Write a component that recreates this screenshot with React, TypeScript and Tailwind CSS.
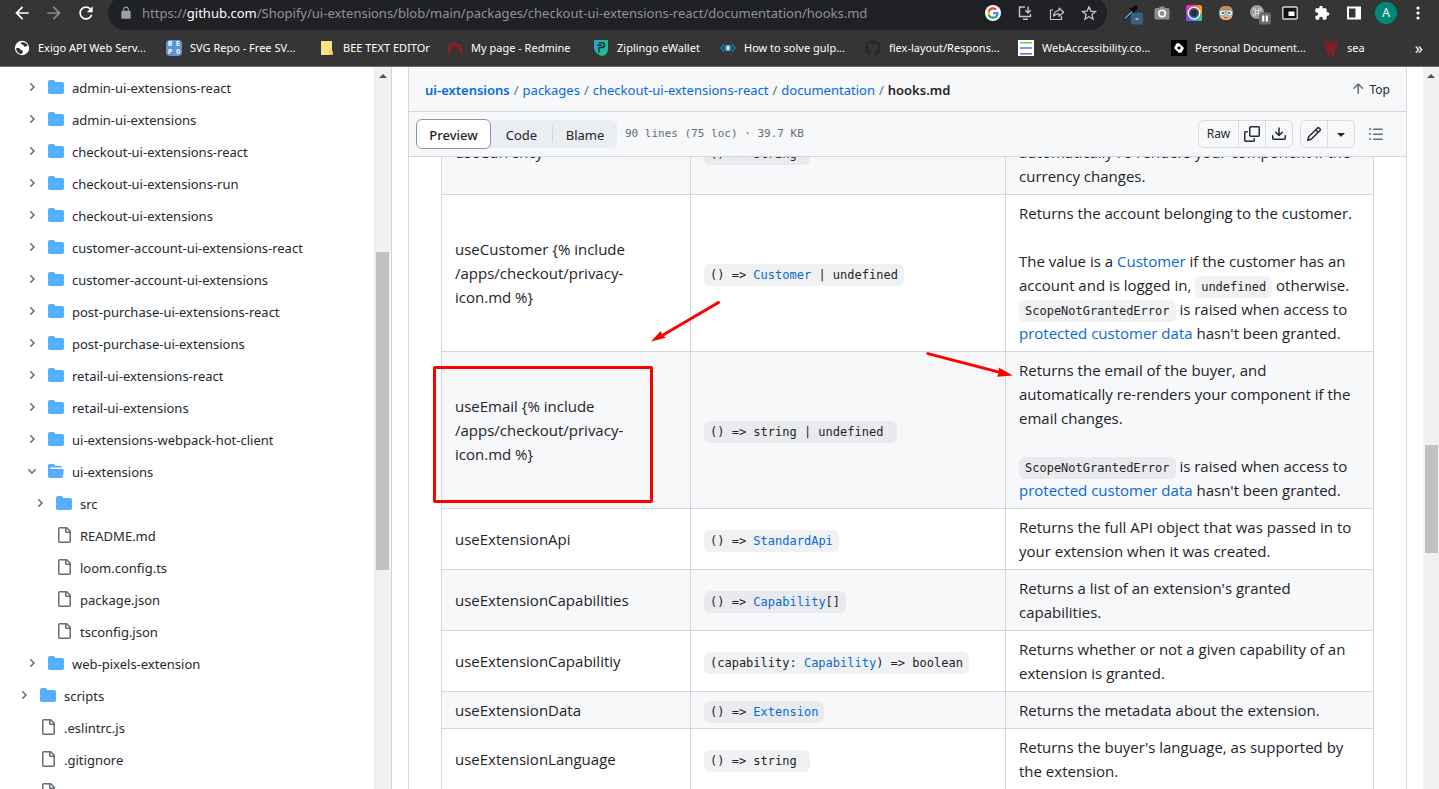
import type { ReactNode } from "react";

/* ---------- icons ---------- */

function Glyph({ d, size = 16, box = 16, className = "" }: { d: string; size?: number; box?: number; className?: string }) {
  return (
    <svg width={size} height={size} viewBox={`0 0 ${box} ${box}`} fill="currentColor" aria-hidden="true" className={`shrink-0 ${className}`}>
      <path d={d} />
    </svg>
  );
}

const paths = {
  folder:
    "M1.75 1A1.75 1.75 0 0 0 0 2.75v10.5C0 14.216.784 15 1.75 15h12.5A1.75 1.75 0 0 0 16 13.25v-8.5A1.75 1.75 0 0 0 14.25 3H7.5a.25.25 0 0 1-.2-.1l-.9-1.2C6.07 1.26 5.55 1 5 1H1.75Z",
  folderOpen:
    "M.513 1.513A1.75 1.75 0 0 1 1.75 1h3.5c.55 0 1.07.26 1.4.7l.9 1.2a.25.25 0 0 0 .2.1H13a1 1 0 0 1 1 1v.5H2.75a.75.75 0 0 0 0 1.5h11.978a1 1 0 0 1 .994 1.117L15 13.25A1.75 1.75 0 0 1 13.25 15H1.75A1.75 1.75 0 0 1 0 13.25V2.75c0-.464.184-.91.513-1.237Z",
  file: "M2 1.75C2 .784 2.784 0 3.75 0h6.586c.464 0 .909.184 1.237.513l2.914 2.914c.329.328.513.773.513 1.237v9.586A1.75 1.75 0 0 1 13.25 16h-9.5A1.75 1.75 0 0 1 2 14.25Zm1.75-.25a.25.25 0 0 0-.25.25v12.5c0 .138.112.25.25.25h9.5a.25.25 0 0 0 .25-.25V6h-2.75A1.75 1.75 0 0 1 9 4.25V1.5Zm6.75.062V4.25c0 .138.112.25.25.25h2.688l-.011-.013-2.914-2.914-.013-.011Z",
  chevronRight:
    "M4.7 10c-.2 0-.4-.1-.5-.2-.3-.3-.3-.8 0-1.1L6.9 6 4.2 3.3c-.3-.3-.3-.8 0-1.1.3-.3.8-.3 1.1 0l3.3 3.2c.3.3.3.8 0 1.1L5.3 9.7c-.2.2-.4.3-.6.3Z",
  chevronDown:
    "M6 8.825c-.2 0-.4-.1-.5-.2l-3.3-3.3c-.3-.3-.3-.8 0-1.1.3-.3.8-.3 1.1 0l2.7 2.7 2.7-2.7c.3-.3.8-.3 1.1 0 .3.3.3.8 0 1.1l-3.2 3.2c-.2.2-.4.3-.6.3Z",
  copy: "M0 6.75C0 5.784.784 5 1.75 5h1.5a.75.75 0 0 1 0 1.5h-1.5a.25.25 0 0 0-.25.25v7.5c0 .138.112.25.25.25h7.5a.25.25 0 0 0 .25-.25v-1.5a.75.75 0 0 1 1.5 0v1.5A1.75 1.75 0 0 1 9.25 16h-7.5A1.75 1.75 0 0 1 0 14.25ZM5 1.75C5 .784 5.784 0 6.75 0h7.5C15.216 0 16 .784 16 1.75v7.5A1.75 1.75 0 0 1 14.25 11h-7.5A1.75 1.75 0 0 1 5 9.25Zm1.75-.25a.25.25 0 0 0-.25.25v7.5c0 .138.112.25.25.25h7.5a.25.25 0 0 0 .25-.25v-7.5a.25.25 0 0 0-.25-.25Z",
  download:
    "M2.75 14A1.75 1.75 0 0 1 1 12.25v-2.5a.75.75 0 0 1 1.5 0v2.5c0 .138.112.25.25.25h10.5a.25.25 0 0 0 .25-.25v-2.5a.75.75 0 0 1 1.5 0v2.5A1.75 1.75 0 0 1 13.25 14ZM7.25 7.689V2a.75.75 0 0 1 1.5 0v5.689l1.97-1.969a.749.749 0 1 1 1.06 1.06l-3.25 3.25a.749.749 0 0 1-1.06 0L4.22 6.78a.749.749 0 1 1 1.06-1.06l1.97 1.969Z",
  pencil:
    "M11.013 1.427a1.75 1.75 0 0 1 2.474 0l1.086 1.086a1.75 1.75 0 0 1 0 2.474l-8.61 8.61c-.21.21-.47.364-.756.445l-3.251.93a.75.75 0 0 1-.927-.928l.929-3.25c.081-.286.235-.547.445-.758l8.61-8.61Zm.176 4.823L9.75 4.81l-6.286 6.287a.253.253 0 0 0-.064.108l-.558 1.953 1.953-.558a.253.253 0 0 0 .108-.064Zm1.238-3.763a.25.25 0 0 0-.354 0L10.811 3.75l1.439 1.44 1.263-1.263a.25.25 0 0 0 0-.354Z",
  triangleDown: "m4.427 7.427 3.396 3.396a.25.25 0 0 0 .354 0l3.396-3.396A.25.25 0 0 0 11.396 7H4.604a.25.25 0 0 0-.177.427Z",
  list: "M5.75 2.5h8.5a.75.75 0 0 1 0 1.5h-8.5a.75.75 0 0 1 0-1.5Zm0 5h8.5a.75.75 0 0 1 0 1.5h-8.5a.75.75 0 0 1 0-1.5Zm0 5h8.5a.75.75 0 0 1 0 1.5h-8.5a.75.75 0 0 1 0-1.5ZM2 14a1 1 0 1 1 0-2 1 1 0 0 1 0 2Zm1-6a1 1 0 1 1-2 0 1 1 0 0 1 2 0ZM2 4a1 1 0 1 1 0-2 1 1 0 0 1 0 2Z",
  arrowUp:
    "M3.47 7.78a.75.75 0 0 1 0-1.06l4.25-4.25a.75.75 0 0 1 1.06 0l4.25 4.25a.751.751 0 0 1-.018 1.042.751.751 0 0 1-1.042.018L9 4.81v7.44a.75.75 0 0 1-1.5 0V4.81L4.53 7.78a.75.75 0 0 1-1.06 0Z",
  back: "M20 11H7.83l5.59-5.59L12 4l-8 8 8 8 1.41-1.41L7.83 13H20v-2z",
  forward: "M12 4l-1.41 1.41L16.17 11H4v2h12.17l-5.58 5.59L12 20l8-8z",
  reload:
    "M17.65 6.35C16.2 4.9 14.21 4 12 4c-4.42 0-7.99 3.58-7.99 8s3.57 8 7.99 8c3.73 0 6.84-2.55 7.73-6h-2.08c-.82 2.33-3.04 4-5.65 4-3.31 0-6-2.69-6-6s2.69-6 6-6c1.66 0 3.14.69 4.22 1.78L13 11h7V4l-2.35 2.35z",
  lock: "M18 8h-1V6c0-2.76-2.24-5-5-5S7 3.24 7 6v2H6c-1.1 0-2 .9-2 2v10c0 1.1.9 2 2 2h12c1.1 0 2-.9 2-2V10c0-1.100-.9-2-2-2zM8.900 8V6c0-1.710 1.390-3.100 3.100-3.100s3.100 1.390 3.100 3.100v2H8.900z",
  puzzle:
    "M20.500 11H19V7c0-1.100-.9-2-2-2h-4V3.500C13 2.120 11.880 1 10.500 1S8 2.120 8 3.500V5H4c-1.100 0-1.990.9-1.990 2v3.800H3.500c1.490 0 2.700 1.210 2.700 2.700s-1.210 2.700-2.700 2.700H2V20c0 1.100.9 2 2 2h3.800v-1.500c0-1.490 1.210-2.700 2.700-2.700 1.490 0 2.700 1.210 2.700 2.700V22H17c1.100 0 2-.9 2-2v-4h1.500c1.380 0 2.500-1.120 2.500-2.500S21.880 11 20.500 11z",
  github:
    "M8 0c4.420 0 8 3.580 8 8a8.013 8.013 0 0 1-5.450 7.590c-.4.080-.55-.17-.55-.38 0-.27.010-1.130.010-2.200 0-.75-.25-1.230-.54-1.480 1.780-.2 3.650-.88 3.650-3.950 0-.88-.31-1.590-.82-2.150.080-.2.360-1.020-.080-2.120 0 0-.67-.22-2.200.82-.64-.18-1.320-.27-2-.27-.68 0-1.360.090-2 .27-1.530-1.030-2.200-.82-2.200-.82-.44 1.100-.16 1.920-.080 2.120-.51.560-.82 1.280-.82 2.150 0 3.060 1.860 3.750 3.640 3.950-.23.2-.44.550-.51 1.070-.46.210-1.610.550-2.330-.66-.15-.24-.6-.83-1.230-.82-.67.010-.27.380.010.530.34.190.73.900.82 1.130.16.450.68 1.310 2.690.94 0 .67.010 1.300.010 1.490 0 .21-.15.450-.55.380A7.995 7.995 0 0 1 0 8c0-4.420 3.580-8 8-8Z",
};

function Svg({ children, box = 16 }: { children: ReactNode; box?: number }) {
  return (
    <svg width="16" height="16" viewBox={`0 0 ${box} ${box}`} fill="none" aria-hidden="true" className="shrink-0 overflow-visible">
      {children}
    </svg>
  );
}

const GoogleIcon = () => (
  <Svg box={24}>
    <circle cx="12" cy="12" r="12" fill="#fff" />
    <path d="M20.300 12.200c0-.6-.1-1.200-.2-1.700H12v3.300h4.700a4 4 0 0 1-1.700 2.600v2.200h2.800c1.600-1.500 2.500-3.700 2.500-6.400z" fill="#4285f4" />
    <path d="M12 20.600c2.300 0 4.300-.8 5.700-2.100L15 16.400c-.8.500-1.800.8-3 .8-2.200 0-4.100-1.500-4.800-3.500H4.300V16A8.600 8.600 0 0 0 12 20.600z" fill="#34a853" />
    <path d="M7.200 13.700a5 5 0 0 1 0-3.300V8.100H4.300a8.600 8.600 0 0 0 0 7.800z" fill="#fbbc05" />
    <path d="M12 6.800c1.300 0 2.400.4 3.300 1.300l2.500-2.500A8.600 8.600 0 0 0 4.300 8.100l2.900 2.300c.7-2 2.600-3.600 4.800-3.600z" fill="#ea4335" />
  </Svg>
);

const InstallIcon = () => (
  <Svg>
    <path d="M8 2H2.500v9.500h11V9M6 14.200h5M11 1.500v6M8.300 5.200 11 7.900l2.700-2.700" stroke="#c4c7c5" strokeWidth="1.400" />
  </Svg>
);
const ShareIcon = () => (
  <Svg>
    <path d="M4 5H1.500v9.500h11V11M4.500 11c.4-3.600 2.300-5.300 5.500-5.500V3l4.700 4.200L10 11.300V8.800c-2.400 0-4 .6-5.500 2.200z" stroke="#c4c7c5" strokeWidth="1.200" strokeLinejoin="round" />
  </Svg>
);
const StarIcon = () => (
  <Svg>
    <path d="M8 1.800l1.900 4.300 4.600.4-3.500 3.100 1 4.600L8 11.800l-4 2.400 1-4.600L1.500 6.500l4.600-.4z" stroke="#c4c7c5" strokeWidth="1.300" />
  </Svg>
);
const DropperIcon = () => (
  <Svg>
    <path d="M9.500 5.500 2.500 12.500 1.500 15 4 14l7-7z" fill="#4a9fe0" stroke="#111" strokeWidth=".8" />
    <path d="M7 3.500 12.300 8.800l1.400-1.400-1-1 2.600-2.600a2.200 2.200 0 0 0-3-3L9.700 3.400l-1-1z" fill="#050505" />
    <rect x="9" y="7.500" width="12" height="12" rx="2" fill="#37617f" />
    <path d="M13.500 14h3" stroke="#fff" />
  </Svg>
);
const CameraIcon = () => (
  <Svg>
    <path d="M2 3h3l1-1.500h4L11 3h3a1.500 1.500 0 0 1 1.500 1.500V13a1.500 1.500 0 0 1-1.500 1.500H2A1.500 1.500 0 0 1 .5 13V4.500A1.500 1.500 0 0 1 2 3z" fill="#8d8d8d" />
    <circle cx="8" cy="8.500" r="3.300" fill="#8d8d8d" stroke="#fff" strokeWidth="1.600" />
  </Svg>
);
const RingIcon = () => (
  <Svg>
    <defs>
      <linearGradient id="ringTop" x1="0" y1="0" x2="1" y2="0">
        <stop offset="0" stopColor="#d633e8" />
        <stop offset=".5" stopColor="#ff3b5c" />
        <stop offset="1" stopColor="#ffb01a" />
      </linearGradient>
      <linearGradient id="ringBottom" x1="0" y1="0" x2="1" y2="0">
        <stop offset="0" stopColor="#8a3bf0" />
        <stop offset=".5" stopColor="#1fa8f0" />
        <stop offset="1" stopColor="#3ad07a" />
      </linearGradient>
    </defs>
    <rect width="16" height="16" rx="2.500" fill="url(#ringTop)" />
    <path d="M0 8h16v5.500a2.500 2.500 0 0 1-2.500 2.500h-11A2.500 2.500 0 0 1 0 13.500z" fill="url(#ringBottom)" />
    <circle cx="8" cy="8" r="5.800" fill="#4a5a70" stroke="#fff" strokeWidth="1.300" />
    <circle cx="8" cy="8" r="3.400" fill="#26303f" />
  </Svg>
);
const FaceIcon = () => (
  <Svg>
    <path d="M1.500 6C1.500 3 4.200 1 8 1s6.500 2 6.500 5v4c0 3-2.800 5-6.500 5s-6.500-2-6.500-5z" fill="#e3b48a" />
    <path d="M1.500 6C1.500 3 4.200 1 8 1s6.500 2 6.500 5c-3-1.500-10-1.500-13 0z" fill="#c08c5c" />
    <circle cx="4.300" cy="8" r="3" fill="#e4f6fc" stroke="#7a8a90" strokeWidth=".7" />
    <circle cx="11.700" cy="8" r="3" fill="#e4f6fc" stroke="#7a8a90" strokeWidth=".7" />
    <circle cx="4.800" cy="8" r="1.200" fill="#3d6f8d" />
    <circle cx="11.200" cy="8" r="1.200" fill="#3d6f8d" />
    <path d="M6 12.700h4" stroke="#8a5633" />
  </Svg>
);
const CommandIcon = () => (
  <Svg>
    <circle cx="7" cy="7" r="7" fill="#9a9a9a" />
    <path d="M5.500 5.500h3v3h-3zM5.500 5.500H4.300A1.200 1.200 0 1 1 5.500 4.300zM8.500 5.500V4.300a1.200 1.200 0 1 1 1.200 1.200zM8.500 8.500h1.200a1.200 1.200 0 1 1-1.200 1.200zM5.500 8.500v1.200a1.200 1.200 0 1 1-1.200-1.200z" stroke="#e2e2e2" strokeWidth=".8" />
    <rect x="9" y="7.500" width="12" height="12" rx="2" fill="#6b6b6b" />
    <path d="M13.200 10.500v6M16.800 10.500v6" stroke="#fff" strokeWidth="2.200" />
  </Svg>
);
const PipIcon = () => (
  <Svg>
    <rect x=".8" y="2" width="14.400" height="12" rx="1" fill="#111" stroke="#d5d5d5" strokeWidth="1.400" />
    <rect x="6.500" y="6.500" width="6" height="4.500" fill="#fff" />
  </Svg>
);
const SidePanelIcon = () => (
  <Svg>
    <path d="M1 1.500h14v13H1zM3 3.500v9h6.500v-9z" fill="#fff" fillRule="evenodd" />
  </Svg>
);
const DotsIcon = () => (
  <Svg>
    <circle cx="8" cy="3" r="1.600" fill="#fff" />
    <circle cx="8" cy="8" r="1.600" fill="#fff" />
    <circle cx="8" cy="13" r="1.600" fill="#fff" />
  </Svg>
);

/* ---------- browser chrome ---------- */

const bookmarks: { label: string; width: string; icon: ReactNode }[] = [
  {
    label: "Exigo API Web Serv...",
    width: "w-[152px]",
    icon: (
      <Svg>
        <circle cx="8" cy="8" r="7.200" fill="#fff" />
        <path d="M2 8.500c2-.8 3.500-.3 4.500 1 .8 1.200 2.200.6 2.500 1.700.2 1-1 1.400-1.300 2.800C4.500 14 2.500 11.500 2 8.500zM7 2.500c-.3 1.600.6 2 1.700 2.200 1.200.2.900 1.800 2.100 2 1.500.2 2-.9 3-.6C13 3.500 10 1.800 7 2.500z" fill="#333" />
      </Svg>
    ),
  },
  {
    label: "SVG Repo - Free SV...",
    width: "w-[153px]",
    icon: (
      <span className="grid h-4 w-4 shrink-0 grid-cols-2 place-items-center rounded-sm bg-[#5f93d0] font-['Liberation_Mono',monospace] text-[7px] leading-[7px] font-bold text-white">
        <span>R</span>
        <span>E</span>
        <span>P</span>
        <span>O</span>
      </span>
    ),
  },
  {
    label: "BEE TEXT EDITOr",
    width: "w-[128px]",
    icon: (
      <Svg>
        <path d="M2 1h11v10h1v4H2z" fill="#fbe08a" />
        <path d="M11 14.500V11h2.500v3.500z" fill="#fbe08a" stroke="#e0b43c" />
      </Svg>
    ),
  },
  {
    label: "My page - Redmine",
    width: "w-[146px]",
    icon: (
      <Svg>
        <path d="M1.800 13c0-5.500 2.200-8.700 6.200-8.700s6.200 3.200 6.200 8.700" stroke="#b01515" strokeWidth="3" strokeDasharray="3 .8" />
      </Svg>
    ),
  },
  {
    label: "Ziplingo eWallet",
    width: "w-[127px]",
    icon: (
      <Svg>
        <path d="M1 0h14v9c0 4-3 7-6 7-4-1-8-4-8-9z" fill="#22b795" />
        <path d="M1 0h6l-2 12C2.500 10 1 8 1 5z" fill="#2aa6d8" />
        <path d="M5.500 2.800H9a2.400 2.400 0 0 1 0 4.800H5.500M4 5.200h5M6 7.600v5" stroke="#12313a" strokeWidth="1.500" />
      </Svg>
    ),
  },
  {
    label: "How to solve gulp...",
    width: "w-[145px]",
    icon: (
      <Svg>
        <path d="M4 4 1 8l3 4M12 4l3 4-3 4" stroke="#2477a8" strokeWidth="1.400" />
        <circle cx="8" cy="8" r="3.300" fill="#3aa5dc" />
        <path d="M7.200 6h1.600v4H7.200z" fill="#fff" />
      </Svg>
    ),
  },
  { label: "flex-layout/Respons...", width: "w-[153px]", icon: <Glyph d={paths.github} className="text-[#24292f]" /> },
  {
    label: "WebAccessibility.co...",
    width: "w-[153px]",
    icon: (
      <Svg>
        <rect width="16" height="16" fill="#fff" />
        <path d="M2 2.700h12" stroke="#5fc94b" strokeWidth="1.400" />
        <path d="M2 8h12" stroke="#4a6fe0" strokeWidth="1.400" />
        <path d="M2 13.800h12" stroke="#7b48c9" strokeWidth="1.400" />
      </Svg>
    ),
  },
  {
    label: "Personal Document...",
    width: "w-[152px]",
    icon: (
      <Svg>
        <rect width="16" height="16" fill="#000" />
        <path d="M5.500 3.500 8 3l5 5-2.500 4.500L8 13 3 8zM8 6 6 8l2 2 2-2z" fill="#fff" fillRule="evenodd" />
      </Svg>
    ),
  },
  {
    label: "sea",
    width: "w-20",
    icon: (
      <Svg>
        <path d="M1.500 1 6 15l2-6 2 6 4.500-14M4 1l3.200 11M12 1 8.800 12M6.300 1 8 7l1.700-6" stroke="#b5121b" strokeWidth="1.100" />
      </Svg>
    ),
  },
];

function BrowserChrome() {
  return (
    <header className="h-[67px] shrink-0 overflow-hidden border-b border-[#6b696b] bg-[#353535] text-white">
      <div className="flex h-[30px] items-center pr-[13px] pl-3.5">
        <nav className="-mt-1 flex items-center gap-4" aria-label="History">
          <button aria-label="Back"><Glyph d={paths.back} box={24} size={20} className="-m-0.5" /></button>
          <button aria-label="Forward" className="text-[#8b8b8b]"><Glyph d={paths.forward} box={24} size={20} className="-m-0.5" /></button>
          <button aria-label="Reload"><Glyph d={paths.reload} box={24} size={20} className="-m-0.5" /></button>
        </nav>
        <div className="-mt-1 ml-3.5 flex h-[34px] min-w-0 flex-1 items-center rounded-full bg-[#202124] pr-2.5 pl-[11px]">
          <Glyph d={paths.lock} box={24} size={14} className="text-[#9aa0a6]" />
          <p className="ml-[9px] flex-1 truncate text-[13px] leading-5 text-[#8f9398]">
            https://<span className="text-white">github.com</span>/Shopify/ui-extensions/blob/main/packages/checkout-ui-extensions-react/documentation/hooks.md
          </p>
          <div className="flex gap-4">
            <GoogleIcon />
            <InstallIcon />
            <ShareIcon />
            <StarIcon />
          </div>
        </div>
        <div className="-mt-1 ml-[15px] flex items-center gap-4">
          <DropperIcon />
          <CameraIcon />
          <RingIcon />
          <FaceIcon />
          <CommandIcon />
          <PipIcon />
          <Glyph d={paths.puzzle} box={24} />
          <SidePanelIcon />
          <button aria-label="Profile" className="-mx-[3px] h-[22px] w-[22px] rounded-full bg-[#00897b] text-[12px] leading-[22px]">A</button>
          <button aria-label="Menu"><DotsIcon /></button>
        </div>
      </div>
      <nav className="flex h-9 items-center pr-4 pl-3.5" aria-label="Bookmarks">
        {bookmarks.map((b) => (
          <a key={b.label} href="#" className={`flex shrink-0 items-center gap-2 text-[11px] leading-4 whitespace-nowrap ${b.width}`}>
            {b.icon}
            {b.label}
          </a>
        ))}
        <button className="ml-auto text-[16px] leading-4" aria-label="More bookmarks">»</button>
      </nav>
    </header>
  );
}

/* ---------- scroll bar ---------- */

function ScrollTrack({ width, offset, length }: { width: string; offset: string; length: string }) {
  return (
    <div className={`flex shrink-0 flex-col items-center bg-[#f1f1f1] ${width}`} aria-hidden="true">
      <svg width="8" height="4" viewBox="0 0 8 4" className="mt-[7px] shrink-0">
        <path d="M0 4 4 0l4 4z" fill="#505050" />
      </svg>
      <div className={`w-[13px] shrink-0 bg-[#c1c1c1] ${offset} ${length}`} />
    </div>
  );
}

/* ---------- file tree ---------- */

type Node = { name: string; kind: "folder" | "open" | "file"; level: 0 | 1 | 2 };

const tree: Node[] = [
  { name: "admin-ui-extensions-react", kind: "folder", level: 1 },
  { name: "admin-ui-extensions", kind: "folder", level: 1 },
  { name: "checkout-ui-extensions-react", kind: "folder", level: 1 },
  { name: "checkout-ui-extensions-run", kind: "folder", level: 1 },
  { name: "checkout-ui-extensions", kind: "folder", level: 1 },
  { name: "customer-account-ui-extensions-react", kind: "folder", level: 1 },
  { name: "customer-account-ui-extensions", kind: "folder", level: 1 },
  { name: "post-purchase-ui-extensions-react", kind: "folder", level: 1 },
  { name: "post-purchase-ui-extensions", kind: "folder", level: 1 },
  { name: "retail-ui-extensions-react", kind: "folder", level: 1 },
  { name: "retail-ui-extensions", kind: "folder", level: 1 },
  { name: "ui-extensions-webpack-hot-client", kind: "folder", level: 1 },
  { name: "ui-extensions", kind: "open", level: 1 },
  { name: "src", kind: "folder", level: 2 },
  { name: "README.md", kind: "file", level: 2 },
  { name: "loom.config.ts", kind: "file", level: 2 },
  { name: "package.json", kind: "file", level: 2 },
  { name: "tsconfig.json", kind: "file", level: 2 },
  { name: "web-pixels-extension", kind: "folder", level: 1 },
  { name: "scripts", kind: "folder", level: 0 },
  { name: ".eslintrc.js", kind: "file", level: 0 },
  { name: ".gitignore", kind: "file", level: 0 },
  { name: "", kind: "file", level: 0 },
];

const indent = ["pl-[18px]", "pl-[26px]", "pl-[34px]"];

function FileTree() {
  return (
    <aside className="flex w-[392px] shrink-0 overflow-hidden border-r border-[#d0d7de]">
      <ul className="min-w-0 flex-1 pt-1 text-[13px] leading-5 text-[#24292f]">
        {tree.map((n) => (
          <li key={n.name}>
            <a href="#" className={`flex h-8 items-center ${indent[n.level]}`}>
              <span className="w-[22px] shrink-0 text-[#656d76]">
                {n.kind !== "file" && <Glyph d={n.kind === "open" ? paths.chevronDown : paths.chevronRight} box={12} size={12} />}
              </span>
              <Glyph
                d={n.kind === "file" ? paths.file : n.kind === "open" ? paths.folderOpen : paths.folder}
                className={n.kind === "file" ? "text-[#656d76]" : "text-[#54aeff]"}
              />
              <span className="ml-2 truncate pt-0.5">{n.name}</span>
            </a>
          </li>
        ))}
      </ul>
      <ScrollTrack width="w-[17px]" offset="mt-[174px]" length="h-[318px]" />
    </aside>
  );
}

/* ---------- document ---------- */

function Code({ children }: { children: ReactNode }) {
  return <code className="rounded-md bg-[#818b98]/12 px-1.5 py-1 font-['DejaVu_Sans_Mono',monospace] text-[12px] leading-4 whitespace-pre">{children}</code>;
}

function Link({ children }: { children: ReactNode }) {
  return <a href="#" className="text-[#0969da]">{children}</a>;
}

const rows: { hook: string; type: ReactNode; text: ReactNode }[] = [
  {
    hook: "useCurrency",
    type: "() => string ",
    text: <>Returns the currency of the checkout, and automatically re-renders your component if the currency changes.</>,
  },
  {
    hook: "useCustomer {% include /apps/checkout/privacy-icon.md %}",
    type: <>() =&gt; <Link>Customer</Link> | undefined</>,
    text: (
      <>
        Returns the account belonging to the customer.
        <br />
        <br />
        The value is a <Link>Customer</Link> if the customer has an account and is logged in, <Code>undefined</Code> otherwise.{" "}
        <Code>ScopeNotGrantedError</Code> is raised when access to <Link>protected customer data</Link> hasn't been granted.
      </>
    ),
  },
  {
    hook: "useEmail {% include /apps/checkout/privacy-icon.md %}",
    type: "() => string | undefined ",
    text: (
      <>
        Returns the email of the buyer, and automatically re-renders your component if the email changes.
        <br />
        <br />
        <Code>ScopeNotGrantedError</Code> is raised when access to <Link>protected customer data</Link> hasn't been granted.
      </>
    ),
  },
  {
    hook: "useExtensionApi",
    type: <>() =&gt; <Link>StandardApi</Link></>,
    text: "Returns the full API object that was passed in to your extension when it was created.",
  },
  {
    hook: "useExtensionCapabilities",
    type: <>() =&gt; <Link>Capability</Link>[]</>,
    text: "Returns a list of an extension's granted capabilities.",
  },
  {
    hook: "useExtensionCapabilitiy",
    type: <>(capability: <Link>Capability</Link>) =&gt; boolean</>,
    text: "Returns whether or not a given capability of an extension is granted.",
  },
  {
    hook: "useExtensionData",
    type: <>() =&gt; <Link>Extension</Link></>,
    text: "Returns the metadata about the extension.",
  },
  {
    hook: "useExtensionLanguage",
    type: "() => string ",
    text: "Returns the buyer's language, as supported by the extension.",
  },
];

function HooksTable() {
  return (
    <table className="-mt-12 w-full table-fixed border-collapse font-['Open_Sans',sans-serif] text-[15px] leading-6 text-[#1f2328]">
      <colgroup>
        <col className="w-[249px]" />
        <col className="w-[315px]" />
        <col />
      </colgroup>
      <tbody>
        {rows.map((r) => (
          <tr key={r.hook} className="odd:bg-[#f6f8fa]">
            <td className="border border-[#d0d7de] px-[13px] py-1.5">{r.hook}</td>
            <td className="border border-[#d0d7de] px-[13px] py-1.5"><Code>{r.type}</Code></td>
            <td className="border border-[#d0d7de] px-[13px] py-1.5">{r.text}</td>
          </tr>
        ))}
      </tbody>
    </table>
  );
}

const crumbs = ["packages", "checkout-ui-extensions-react", "documentation"];

function FileHeader() {
  return (
    <div className="shrink-0 bg-[#f6f8fa]">
      <div className="flex h-[45px] items-center border-b border-[#d0d7de] pr-4 pl-4">
        <nav className="flex flex-1 gap-1 pt-0.5 text-[13px] leading-5 whitespace-nowrap text-[#0969da]" aria-label="Breadcrumb">
          <a href="#" className="font-semibold">ui-extensions</a>
          {crumbs.map((c) => (
            <span key={c} className="flex gap-1">
              <span className="text-[#656d76]">/</span>
              <a href="#">{c}</a>
            </span>
          ))}
          <span className="text-[#656d76]">/</span>
          <span className="font-semibold text-[#1f2328]">hooks.md</span>
        </nav>
        <button className="flex items-center gap-1 text-[12px] leading-5 text-[#24292f]">
          <Glyph d={paths.arrowUp} className="text-[#656d76]" />
          <span className="pt-0.5">Top</span>
        </button>
      </div>
      <div className="flex h-[45px] items-center border-b border-[#d0d7de] pr-[22px] pl-[7px]">
        <div className="flex h-7 items-center rounded-md bg-[#eaeef2] text-[13px] leading-5 text-[#1f2328]">
          <button className="h-[30px] w-[75px] rounded-md border border-[#8c959f] bg-white pt-0.5 font-medium">Preview</button>
          <button className="w-[61px] pt-0.5">Code</button>
          <span className="h-4 w-px bg-[#d0d7de]" />
          <button className="w-16 pt-0.5">Blame</button>
        </div>
        <span className="ml-2 flex-1 truncate font-['DejaVu_Sans_Mono',monospace] text-[11px] text-[#656d76]">90 lines (75 loc) · 39.7 KB</span>
        <div className="flex h-7 divide-x divide-[#d8dbdf] rounded-md border border-[#d8dbdf] text-[#24292f]">
          <button className="w-10 text-[12px]">Raw</button>
          <button className="flex w-[27px] items-center justify-center" aria-label="Copy raw file"><Glyph d={paths.copy} /></button>
          <button className="flex w-[26px] items-center justify-center" aria-label="Download raw file"><Glyph d={paths.download} /></button>
        </div>
        <div className="ml-[7px] flex h-7 divide-x divide-[#d8dbdf] rounded-md border border-[#d8dbdf] text-[#24292f]">
          <button className="flex w-[27px] items-center justify-center" aria-label="Edit file"><Glyph d={paths.pencil} /></button>
          <button className="flex w-[26px] items-center justify-center" aria-label="More edit options"><Glyph d={paths.triangleDown} /></button>
        </div>
        <button className="ml-[13px] text-[#656d76]" aria-label="Outline"><Glyph d={paths.list} /></button>
      </div>
    </div>
  );
}

/* ---------- annotations drawn over the page ---------- */

function Annotations() {
  return (
    <div className="pointer-events-none absolute inset-0" aria-hidden="true">
      <div className="absolute top-[299px] left-[433px] h-[137px] w-[220px] rounded-xs border-3 border-[#ff0000]" />
      <svg className="absolute top-[233px] left-[650px]" width="72" height="44" viewBox="650 300 72 44">
        <path d="M718.500 302.500 663 335" stroke="#f00" strokeWidth="3" strokeLinecap="round" />
        <path d="M651 341.500 660.700 331l1.800 4.300 3.300 2.500z" fill="#f00" />
      </svg>
      <svg className="absolute top-[283px] left-[924px]" width="90" height="32" viewBox="924 350 90 32">
        <path d="M928 353.600 1000 372.400" stroke="#f00" strokeWidth="3" strokeLinecap="round" />
        <path d="M1013 375.500 998.500 367.500l.8 4.700-2.300 4.600z" fill="#f00" />
      </svg>
    </div>
  );
}

export default function App() {
  return (
    <div className="flex h-screen flex-col overflow-hidden bg-white font-['Noto_Sans','Open_Sans',sans-serif]">
      <BrowserChrome />
      <div className="relative flex min-h-0 flex-1">
        <FileTree />
        <main className="flex min-w-0 flex-1">
          <section className="mx-4 flex min-w-0 flex-1 flex-col overflow-hidden border-x border-[#d0d7de]">
            <FileHeader />
            <div className="min-h-0 flex-1 overflow-hidden px-8">
              <HooksTable />
            </div>
          </section>
          <ScrollTrack width="w-4" offset="mt-[367px]" length="h-[108px]" />
        </main>
        <Annotations />
      </div>
    </div>
  );
}
